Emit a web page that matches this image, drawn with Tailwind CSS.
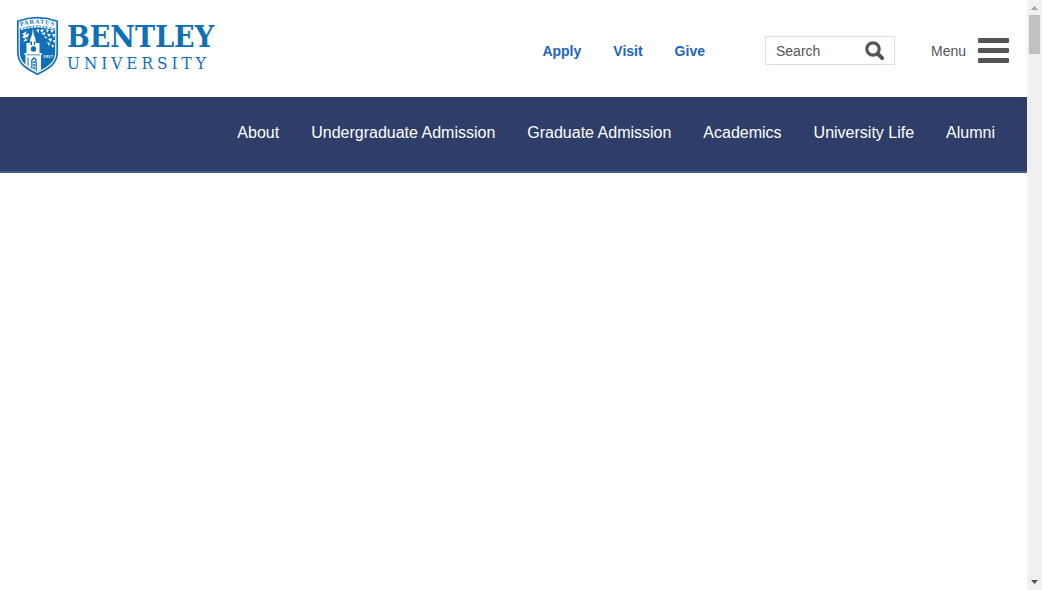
<!DOCTYPE html>
<html lang="en">
<head>
<meta charset="utf-8">
<meta name="viewport" content="width=device-width, initial-scale=1">
<title>Bentley University</title>
<script src="https://cdn.jsdelivr.net/npm/@tailwindcss/browser@4"></script>
</head>
<body class="flex min-h-screen bg-white font-['Liberation_Sans',Arial,sans-serif]">
<div class="min-w-0 flex-1">
  <header class="flex items-start justify-between pt-4 pr-[17px] pb-5 pl-4">
    <a href="#" aria-label="Bentley University" class="flex gap-2 text-[#0f6fb7]">
      <svg class="h-[61px] w-[43px]" viewBox="0 0 43 61" aria-hidden="true">
        <path d="M1.800 5.200Q21.500-1.800 41.200 5.200V36c0 11-7 16-19.700 22.200C8.800 52 1.800 47 1.800 36Z" fill="#fff" stroke="currentColor" stroke-width="1.700"/>
        <path d="M3.800 12.500Q21.500 6.500 39.200 12.500V36c0 9.500-6 14-17.700 20C9.800 50 3.800 45.500 3.800 36Z" fill="currentColor"/>
        <defs><path id="motto" d="M3.500 10.500Q21.500 4.500 39.500 10.500"/></defs>
        <text class="tracking-[1px]" font-size="6" font-weight="700" font-family="Liberation Serif, serif" fill="currentColor"><textPath href="#motto" startOffset="50%" text-anchor="middle">PARATUS</textPath></text>
        <path d="M5 13.500Q21.500 8 38.500 13.500" fill="none" stroke="#fff" stroke-width="1.600" stroke-dasharray="2.500 .8"/>
        <g fill="#fff">
          <path d="M16.900 12 17.700 18 19.700 24V27H23.500V37H26V39H25V54L21.500 56 9.500 49V39H8.500V37H10.500V27H14V24L16.200 18Z"/>
          <path d="M6 18 11 15 9 19 13 17 12 21 8 22 12 24 7 26 10 22 6 22 8 19Z"/>
          <path d="M20 14 23 13 23 17ZM24 14 28 13 26 17ZM25 18 29 16 29 19ZM30 13 33 14 31 17ZM34 14 38 14 36 17ZM31 18 35 18 33 21ZM36 18 39 18 38 22ZM28 20 31 21 30 23ZM32 23 36 22 35 26ZM37 24 39 24 38 28ZM31 26 34 27 33 30ZM35 29 38 29 37 32Z"/>
        </g>
        <g fill="currentColor">
          <circle cx="17.500" cy="33" r="2.700"/>
          <path d="M10.500 38.500H24V39.300H10.500ZM11.500 41.500H12.500V50L11.500 49.500Z"/>
          <path d="M15.200 52V44Q18 38.500 20.800 44V55L19.500 54.500V44.500Q18 41.500 16.500 44.500V52.500Z"/>
          <path d="M17.200 45H18.800V47H17.200ZM17.200 48H18.800V50H17.200ZM17.200 51H18.800V53H17.200ZM14.500 25.500H16V29H14.500ZM18 25.500H19V29H18Z"/>
        </g>
        <text x="27" y="42" font-size="5" font-weight="700" font-family="Liberation Serif, serif" fill="#fff">1917</text>
      </svg>
      <span class="flex flex-col pt-[5px] font-['DejaVu_Serif_Condensed','DejaVu_Serif',serif]">
        <span class="text-[30px] leading-8 font-bold">BENTLEY</span>
        <span class="text-[17px] leading-5 tracking-[4px]">UNIVERSITY</span>
      </span>
    </a>
    <div class="flex items-center pt-5">
      <nav aria-label="Quick links" class="mr-15 flex gap-8 text-sm leading-7 font-bold text-[#1e64bd]">
        <a href="#">Apply</a><a href="#">Visit</a><a href="#">Give</a>
      </nav>
      <form role="search" class="mr-9 flex h-[29px] w-[130px] items-center border border-[#d8deea] pr-2 pl-2.5 text-[#555]">
        <input type="search" aria-label="Search" placeholder="Search" class="min-w-0 flex-1 bg-transparent text-sm leading-5 outline-none placeholder:text-[#555]">
        <button type="button" aria-label="Submit search">
          <svg class="size-[22px]" viewBox="0 0 22 22" fill="none" stroke="currentColor" aria-hidden="true"><circle cx="9" cy="9" r="6.200" stroke-width="3.200"/><path d="m14 14 4.200 4.200" stroke-width="4" stroke-linecap="round"/></svg>
        </button>
      </form>
      <button type="button" class="flex items-center gap-2.5 text-sm text-[#555]">Menu
        <svg class="h-[27px] w-[34px]" viewBox="0 0 34 27" fill="currentColor" aria-hidden="true"><rect x="2" y="1" width="31" height="5" rx="1"/><rect x="2" y="11" width="31" height="5" rx="1"/><rect x="2" y="21" width="31" height="5" rx="1"/></svg>
      </button>
    </div>
  </header>
  <nav aria-label="Main" class="flex justify-end gap-8 border-b-2 border-[#465a8d] bg-[#2e3e68] px-8 pt-6 pb-[26px] text-base text-white">
    <a href="#">About</a><a href="#">Undergraduate Admission</a><a href="#">Graduate Admission</a><a href="#">Academics</a><a href="#">University Life</a><a href="#">Alumni</a>
  </nav>
</div>
<div aria-hidden="true" class="flex w-[15px] shrink-0 flex-col items-center bg-[#f0f0f0]">
  <svg class="size-[15px]" viewBox="0 0 15 15" fill="#a3a3a3"><path d="M4 10 7.500 6 11 10Z"/></svg>
  <div class="h-[39px] w-[11px] bg-[#c1c1c1]"></div>
  <svg class="mt-auto size-[15px]" viewBox="0 0 15 15" fill="#505050"><path d="M4 5 7.500 9 11 5Z"/></svg>
</div>
</body>
</html>
